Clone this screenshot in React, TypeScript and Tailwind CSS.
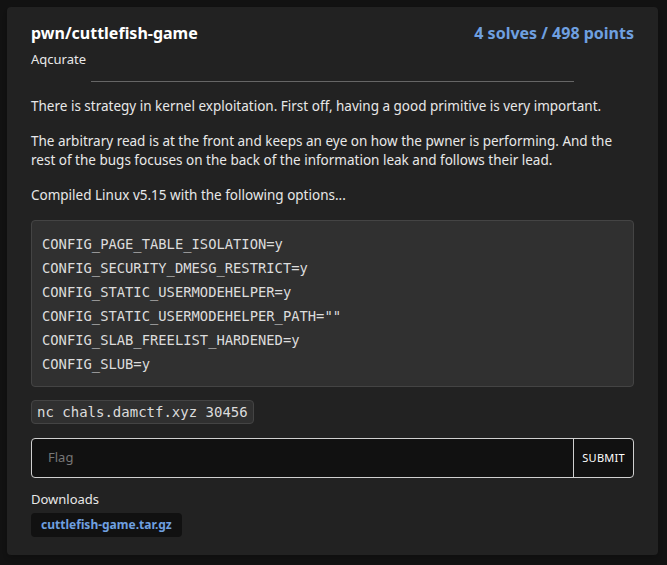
import React from 'react';

const configLines = [
  'CONFIG_PAGE_TABLE_ISOLATION=y',
  'CONFIG_SECURITY_DMESG_RESTRICT=y',
  'CONFIG_STATIC_USERMODEHELPER=y',
  'CONFIG_STATIC_USERMODEHELPER_PATH=""',
  'CONFIG_SLAB_FREELIST_HARDENED=y',
  'CONFIG_SLUB=y',
];

export default function App() {
  return (
    <div
      className="min-h-[565px] bg-[#121212] p-[7px] pr-[9px] text-[#e8e8e8]"
      style={{ fontFamily: '"Noto Sans", "Open Sans", sans-serif' }}
    >
      <div className="rounded bg-[#222222] px-6 pt-[14px] pb-[18px] shadow-md">
        {/* header */}
        <div className="flex items-start justify-between">
          <div>
            <h1 className="text-[16px] font-bold leading-[24px] text-white">pwn/cuttlefish-game</h1>
            <div className="mt-[5px] text-[13px] leading-[18px]">Aqcurate</div>
          </div>
          <div className="text-[16px] font-bold leading-[24px] text-[#6fa0e0]">4 solves / 498 points</div>
        </div>

        <hr className="mx-auto mt-[13px] w-[80%] border-t border-[#666]" />

        {/* description */}
        <div className="mt-[15px] space-y-[16px] text-[13.5px] leading-[19px]">
          <p>There is strategy in kernel exploitation. First off, having a good primitive is very important.</p>
          <p>
            The arbitrary read is at the front and keeps an eye on how the pwner is performing. And the rest of the
            bugs focuses on the back of the information leak and follows their lead.
          </p>
          <p>Compiled Linux v5.15 with the following options...</p>
        </div>

        <pre
          className="mt-[15px] rounded border border-[#444] bg-[#303030] px-[10px] pt-[11px] pb-[10px] text-[13.8px] leading-[24px] text-[#dcdcdc]"
          style={{ fontFamily: '"DejaVu Sans Mono", monospace' }}
        >
          {configLines.join('\n')}
        </pre>

        <div className="mt-[12px]">
          <code
            className="inline-block rounded border border-[#444] bg-[#303030] px-[5px] text-[14px] leading-[22px] text-[#dcdcdc]"
            style={{ fontFamily: '"DejaVu Sans Mono", monospace' }}
          >
            nc chals.damctf.xyz 30456
          </code>
        </div>

        {/* flag form */}
        <div className="mt-[14px] flex h-[40px] rounded-[4px] border border-[#d0d0d0] bg-[#111]">
          <input
            placeholder="Flag"
            className="min-w-0 flex-1 bg-transparent px-4 text-[13px] text-white outline-none placeholder:text-[#777]"
          />
          <button className="border-l border-[#d0d0d0] px-[8px] text-[11px] tracking-wide text-white">SUBMIT</button>
        </div>

        <div className="mt-[12px] text-[13px] leading-[18px]">Downloads</div>
        <a
          href="#"
          className="mt-[5px] inline-block rounded bg-[#111] px-[10px] text-[12px] font-bold leading-[24px] text-[#6fa0e0]"
        >
          cuttlefish-game.tar.gz
        </a>
      </div>
    </div>
  );
}
